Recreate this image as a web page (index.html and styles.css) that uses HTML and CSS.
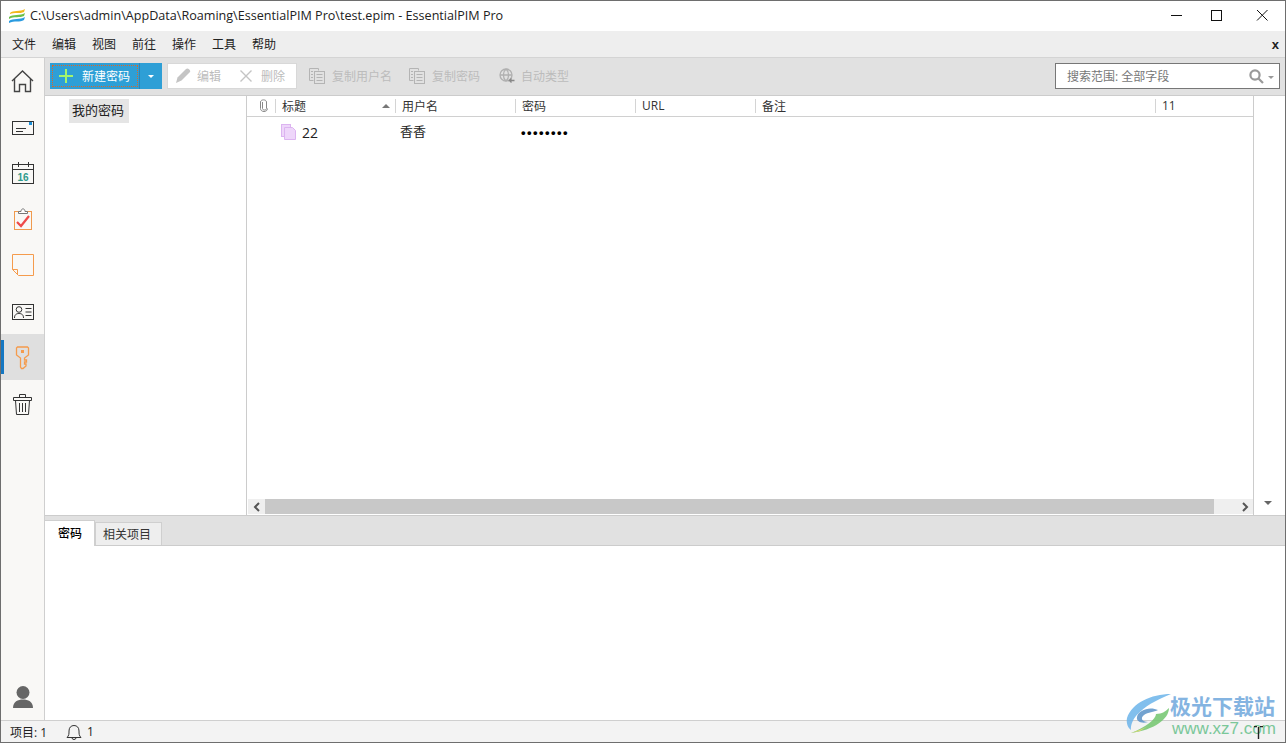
FILE: index.html
```html
<!DOCTYPE html>
<html lang="zh-CN">

<head>
    <meta charset="UTF-8">
    <title>EssentialPIM Pro</title>
    <link rel="stylesheet" href="styles.css">
</head>

<body>
    <div class="window">
        <!-- Title bar -->
        <div class="titlebar">
            <svg class="app-icon" width="16" height="14" viewBox="0 0 16 14">
                <path d="M1 4 C4 1 11 3 16 0 L15 3 C11 5 5 3 1 5Z" fill="#f2b81c" />
                <path d="M0 8 C4 5 11 7 16 4 L15 7 C11 9 5 7 0 10Z" fill="#6cc04a" />
                <path d="M0 12 C4 9 11 11 16 8 L15 11 C11 14 5 11 0 14Z" fill="#2a9be0" />
            </svg>
            <span class="title-text">C:\Users\admin\AppData\Roaming\EssentialPIM Pro\test.epim - EssentialPIM Pro</span>
            <div class="win-buttons">
                <svg width="46" height="30" viewBox="0 0 46 30"><path d="M24 14.5H35" stroke="#111" fill="none" /></svg>
                <svg width="46" height="30" viewBox="0 0 46 30"><rect x="18.5" y="9.5" width="10" height="10" stroke="#111" fill="none" /></svg>
                <svg width="46" height="30" viewBox="0 0 46 30"><path d="M18 9L28.5 19.5M28.5 9L18 19.5" stroke="#111" fill="none" /></svg>
            </div>
        </div>

        <!-- Menu -->
        <div class="menubar">
            <span>文件</span>
            <span>编辑</span>
            <span>视图</span>
            <span>前往</span>
            <span>操作</span>
            <span>工具</span>
            <span>帮助</span>
            <b class="menu-close">x</b>
        </div>

        <div class="main">
            <!-- Left navigation -->
            <div class="nav">
                <div class="nav-item">
                    <svg width="24" height="24" viewBox="0 0 24 24" fill="none" stroke="#444" stroke-width="1.4">
                        <path d="M1 11L11.5 1L22 11" />
                        <path d="M3.5 9V21.5H8.5V14.5H14.5V21.5H19.5V9" />
                    </svg>
                </div>
                <div class="nav-item">
                    <svg width="24" height="24" viewBox="0 0 24 24" fill="none" stroke="#333">
                        <rect x="1.5" y="5.5" width="21" height="13" />
                        <path d="M5 12.5H15M5 15.5H12" />
                        <rect x="18" y="6" width="3" height="3" fill="#1a8fd8" stroke="none" />
                    </svg>
                </div>
                <div class="nav-item">
                    <svg width="24" height="24" viewBox="0 0 24 24" fill="none" stroke="#333">
                        <rect x="1.5" y="2.5" width="21" height="19" />
                        <path d="M1.5 7.5H22.5M7.5 0V5M17.5 0V5" />
                        <text class="cal-day" x="12" y="18.5" text-anchor="middle">16</text>
                    </svg>
                </div>
                <div class="nav-item">
                    <svg width="24" height="24" viewBox="0 0 24 24" fill="none">
                        <rect x="3.5" y="3.5" width="17" height="18" stroke="#f09a4e" />
                        <path d="M7.5 5.5V3.5H10C10 0 14 0 14 3.5H16.5V5.5Z" fill="#fff" stroke="#777" />
                        <path d="M6 14L10 18L18 8" stroke="#ee4a4a" stroke-width="2.2" />
                    </svg>
                </div>
                <div class="nav-item">
                    <svg width="24" height="24" viewBox="0 0 24 24" fill="none" stroke="#f59b4c">
                        <path d="M1.5 .5H22.5V21.5H7.5L1.5 15.5Z" />
                        <path d="M1.5 15.5H6.5V20.5" />
                    </svg>
                </div>
                <div class="nav-item">
                    <svg width="24" height="24" viewBox="0 0 24 24" fill="none" stroke="#333">
                        <rect x="1.5" y="4.5" width="21" height="15" />
                        <circle cx="8" cy="9.5" r="2.8" />
                        <path d="M3.5 18C3.5 14.5 5.5 13.5 8 13.5S12.5 14.5 12.5 18" />
                        <path d="M14.5 8.5H20.5M14.5 12H20.5M14.5 15.5H20.5" />
                    </svg>
                </div>
                <div class="nav-item nav-item-active">
                    <svg width="24" height="24" viewBox="0 0 24 24" fill="none" stroke="#f59b4c" stroke-width="1.3">
                        <path d="M6.5 1H16.5L17.5 2V9L13.5 12V14H15.5V16H13.5V18H15V20L12 22.5H10.5L9.5 21V12L5.5 9V2Z" />
                        <rect x="10" y="4" width="3" height="3" fill="#f59b4c" stroke="none" />
                    </svg>
                </div>
                <div class="nav-item">
                    <svg width="24" height="24" viewBox="0 0 24 24" fill="none" stroke="#333">
                        <path d="M2.5 5.5H20.5V8.5H2.5ZM8.5 5V2.5H14.5V5" />
                        <path d="M4.5 8.5L5.5 22.5H17.5L18.5 8.5" />
                        <path d="M8.5 11V20M11.5 11V20M14.5 11V20" />
                    </svg>
                </div>
                <div class="nav-item nav-user">
                    <svg width="24" height="24" viewBox="0 0 24 24" fill="#666">
                        <circle cx="12" cy="6.5" r="6.5" />
                        <path d="M2 22C2 15.5 7 13.5 12 13.5S22 15.5 22 22Z" />
                    </svg>
                </div>
            </div>

            <div class="content">
                <!-- Toolbar -->
                <div class="toolbar">
                    <div class="new-btn">
                        <div class="new-btn-main">
                            <svg width="16" height="16" viewBox="0 0 16 16"><path d="M8 1V15M1 8H15" stroke="#a4f56c" stroke-width="2" /></svg>
                            <span>新建密码</span>
                        </div>
                        <div class="new-btn-drop"></div>
                    </div>
                    <div class="edit-group">
                        <span class="tool tool-edit">
                            <svg width="16" height="16" viewBox="0 0 16 16" fill="#c4c4c4"><path d="M1 15L2.5 9.5L11 1C12 .2 13 .2 14 1.2S15.6 3 15 4L6.5 12.5Z" /></svg>
                            <span>编辑</span>
                        </span>
                        <span class="tool tool-delete">
                            <svg width="14" height="14" viewBox="0 0 14 14"><path d="M1.5 1.5L12.5 12.5M12.5 1.5L1.5 12.5" stroke="#c4c4c4" stroke-width="1.4" /></svg>
                            <span>删除</span>
                        </span>
                    </div>
                    <span class="tool tool-copy-user">
                        <svg width="16" height="16" viewBox="0 0 16 16" fill="none" stroke="#b4b4b4"><path d="M9.5 2.5V.5H.5V12.5H4.5" /><rect x="5.5" y="3.5" width="10" height="12" /><path d="M7.5 6.5H13.5M7.5 9.5H13.5M7.5 12.5H13.5M2 3.5H4M2 6.5H4M2 9.5H4" /></svg>
                        <span>复制用户名</span>
                    </span>
                    <span class="tool tool-copy-pass">
                        <svg width="16" height="16" viewBox="0 0 16 16" fill="none" stroke="#b4b4b4"><path d="M9.5 2.5V.5H.5V12.5H4.5" /><rect x="5.5" y="3.5" width="10" height="12" /><path d="M7.5 6.5H13.5M7.5 9.5H13.5M7.5 12.5H13.5M2 3.5H4M2 6.5H4M2 9.5H4" /></svg>
                        <span>复制密码</span>
                    </span>
                    <span class="tool tool-auto">
                        <svg width="16" height="16" viewBox="0 0 16 16" fill="none" stroke="#b0b0b0" stroke-width="1.3"><circle cx="7" cy="7" r="6" /><path d="M1 7H13M7 1C3.5 4 3.5 10 7 13M7 1C10.5 4 10.5 10 7 13" /><path d="M15.5 12.5H10.5L12.5 10.5M10.5 12.5L12.5 14.5" stroke="#888" fill="#e1e1e1" /></svg>
                        <span>自动类型</span>
                    </span>
                    <div class="search">
                        <span class="search-text">搜索范围: 全部字段</span>
                        <svg width="15" height="15" viewBox="0 0 15 15" fill="none" stroke="#999" stroke-width="2.2"><circle cx="6" cy="6" r="4.6" /><path d="M9.5 9.5L14 14" /></svg>
                        <i class="caret caret-search"></i>
                    </div>
                </div>

                <div class="panes">
                    <!-- Folder tree -->
                    <div class="tree">
                        <span class="tree-node">我的密码</span>
                    </div>

                    <!-- Password list -->
                    <div class="list">
                        <div class="list-head">
                            <div class="head-clip">
                                <svg width="10" height="13" viewBox="0 0 10 13" fill="none" stroke="#888"><path d="M3.5 3V9.5C3.5 11.5 7.5 11.5 7.5 9.5V3C7.5 .2 1.5 .2 1.5 3V9.5C1.5 13.5 8.5 13.5 8.5 9.5" /></svg>
                            </div>
                            <div class="col col-title">标题<i class="sort-arrow"></i></div>
                            <div class="col">用户名</div>
                            <div class="col">密码</div>
                            <div class="col">URL</div>
                            <div class="col col-notes">备注</div>
                            <div class="col col-num">11</div>
                        </div>
                        <div class="list-row">
                            <svg class="row-icon" width="15" height="16" viewBox="0 0 15 16" fill="#eed6fa" stroke="#dcb4f0">
                                <rect x=".5" y=".5" width="9" height="12" />
                                <path d="M3.5 3.5H11.5L14.5 6.5V15.5H3.5Z" />
                            </svg>
                            <span class="cell cell-title">22</span>
                            <span class="cell cell-user">香香</span>
                            <span class="cell cell-pass">••••••••</span>
                        </div>
                        <div class="hscroll">
                            <div class="hscroll-btn hscroll-left">
                                <svg width="8" height="10" viewBox="0 0 8 10" fill="none"><path d="M6 1L2 5L6 9" stroke="#555" stroke-width="2" /></svg>
                            </div>
                            <div class="hscroll-thumb"></div>
                            <div class="hscroll-btn hscroll-right">
                                <svg width="8" height="10" viewBox="0 0 8 10" fill="none"><path d="M2 1L6 5L2 9" stroke="#555" stroke-width="2" /></svg>
                            </div>
                        </div>
                    </div>

                    <div class="side-col">
                        <i class="caret caret-side"></i>
                    </div>
                </div>

                <!-- Detail tabs -->
                <div class="tabs">
                    <span class="tab tab-active">密码</span>
                    <span class="tab">相关项目</span>
                </div>
                <div class="detail"></div>
            </div>
        </div>

        <!-- Status bar -->
        <div class="statusbar">
            <span class="status-count">项目: 1</span>
            <svg width="16" height="16" viewBox="0 0 16 16" fill="none" stroke="#333"><path d="M1 13.5C3 11.5 3 10 3 7C3 3.5 5 1.5 8 1.5S13 3.5 13 7C13 10 13 11.5 15 13.5ZM6 14C6 16 10 16 10 14" /></svg>
            <span class="status-bell">1</span>
        </div>

        <!-- Watermark over the window corner -->
        <div class="watermark">
            <svg width="46" height="41" viewBox="0 0 46 41">
                <path d="M45 1C25 1 6 10 1 25C0 30 2 35 5 37C4 28 12 14 45 1Z" fill="#6cb4ea" />
                <path d="M43 15C43 26 28 37 5 40C20 34 30 26 30 21C36 21 40 18 43 15Z" fill="#72c66e" />
                <path d="M5 40C12 38 18 35 22 33L14 38Z" fill="#e0d75c" />
                <path d="M32 17C24 13 12 17 11 24C10 28 15 31 22 29C16 29 14 25 18 22C22 19 28 19 32 17Z" fill="#5b93c8" />
            </svg>
            <div class="wm-text">
                <span class="wm-name">极光下载站</span>
                <span class="wm-url">www.xz7.com</span>
            </div>
        </div>
        <svg class="text-cursor" width="9" height="13" viewBox="0 0 9 13"><path d="M0 .5H3M6 .5H9M4.5 1V13" stroke="#222" stroke-width="1.4" fill="none" /></svg>
    </div>
</body>

</html>
```

FILE: styles.css
```css
* {
    box-sizing: border-box;
}

html,
body {
    margin: 0;
    height: 100%;
    overflow: hidden;
}

body {
    font-family: "Open Sans", "Noto Sans CJK SC", sans-serif;
    font-size: 12px;
    color: #222;
    background-color: #fff;
}

.window {
    position: relative;
    display: flex;
    flex-direction: column;
    width: 1286px;
    height: 743px;
    border: 1px solid #6e6e6e;
}

/* Title bar */
.titlebar {
    display: flex;
    align-items: center;
    flex: none;
    height: 30px;
    padding-left: 8px;
    background-color: #fff;
}

.app-icon {
    margin-right: 5px;
}

.title-text {
    margin-top: -2px;
    font-size: 12.6px;
    color: #222;
}

.win-buttons {
    display: flex;
    margin-left: auto;
}

.win-buttons svg {
    display: block;
}

/* Menu */
.menubar {
    display: flex;
    align-items: center;
    gap: 16px;
    flex: none;
    height: 26px;
    padding: 0 6px 0 11px;
    background-color: #eeeeee;
}

.menu-close {
    margin-left: auto;
    font-family: "Liberation Sans", sans-serif;
    font-size: 13px;
}

.main {
    display: flex;
    flex: 1;
    min-height: 0;
}

/* Left navigation */
.nav {
    display: flex;
    flex-direction: column;
    flex: none;
    width: 44px;
    background-color: #f9f8f6;
    border-top: 1px solid #d4d4d4;
    border-right: 1px solid #cfcfcf;
}

.nav-item {
    position: relative;
    flex: none;
    height: 46px;
    padding: 12px 0 0 10px;
}

.nav-item svg {
    display: block;
}

.nav-item-active {
    background-color: #dfdfdf;
}

/* blue marker on the selected module */
.nav-item-active::before {
    content: "";
    position: absolute;
    left: 0;
    top: 6px;
    width: 3px;
    height: 34px;
    background-color: #1577c2;
}

.nav-user {
    margin-top: auto;
}

.cal-day {
    font-family: "Liberation Sans", sans-serif;
    font-size: 10px;
    font-weight: 700;
    fill: #2f9a8c;
    stroke: none;
}

.content {
    display: flex;
    flex-direction: column;
    flex: 1;
    min-width: 0;
}

/* Toolbar */
.toolbar {
    display: flex;
    align-items: center;
    flex: none;
    height: 39px;
    padding: 0 5px 1px;
    background-color: #e1e1e1;
    border-top: 1px solid #d4d4d4;
    border-bottom: 1px solid #cccccc;
}

.new-btn {
    display: flex;
    align-items: center;
    width: 112px;
    height: 26px;
    background-color: #2e9fd6;
    color: #fff;
}

.new-btn-main {
    display: flex;
    align-items: center;
    gap: 8px;
    width: 86px;
    height: 22px;
    margin-left: 2px;
    padding-left: 5px;
    border: 1px dotted #d9682a;
}

.new-btn-drop {
    position: relative;
    flex: 1;
    height: 26px;
    margin-left: 1px;
    border-left: 1px solid #2a86b8;
}

.new-btn-drop::after {
    content: "";
    position: absolute;
    left: 8px;
    top: 12px;
    border: 3px solid transparent;
    border-top: 3px solid #fff;
}

.edit-group {
    display: flex;
    align-items: center;
    width: 130px;
    height: 26px;
    margin-left: 5px;
    background-color: #fff;
    border: 1px solid #d8d8d8;
}

.tool {
    display: flex;
    align-items: center;
    color: #bcbcbc;
}

.tool svg {
    flex: none;
}

.tool-edit {
    gap: 6px;
    margin-left: 7px;
}

.tool-delete {
    gap: 8px;
    margin-left: 18px;
}

.tool-copy-user,
.tool-copy-pass {
    gap: 7px;
}

.tool-copy-user {
    margin-left: 12px;
}

.tool-copy-pass {
    margin-left: 17px;
}

.tool-auto {
    gap: 6px;
    margin-left: 19px;
}

.search {
    display: flex;
    align-items: center;
    width: 225px;
    height: 26px;
    margin-left: auto;
    padding-left: 11px;
    background-color: #fff;
    border: 1px solid #777;
}

.search-text {
    flex: 1;
    color: #777;
}

.caret {
    display: block;
    width: 0;
    height: 0;
    border-left: 3px solid transparent;
    border-right: 3px solid transparent;
    border-top: 3px solid #999;
}

.caret-search {
    margin: 2px 5px 0 4px;
}

/* Panes */
.panes {
    display: flex;
    flex: none;
    height: 419px;
}

.tree {
    flex: none;
    width: 202px;
    padding: 3px 0 0 24px;
    border-right: 1px solid #cccccc;
}

.tree-node {
    display: block;
    width: 60px;
    height: 24px;
    padding-left: 3px;
    font-size: 13px;
    line-height: 23px;
    background-color: #e5e5e5;
}

.list {
    display: flex;
    flex-direction: column;
    flex: none;
    width: 1007px;
    border-right: 1px solid #cccccc;
}

.list-head {
    display: flex;
    align-items: center;
    flex: none;
    height: 21px;
    padding-bottom: 1px;
    border-bottom: 1px solid #d0d0d0;
}

.head-clip {
    flex: none;
    width: 28px;
    padding-left: 12px;
}

.head-clip svg {
    display: block;
}

.col {
    display: flex;
    align-items: center;
    flex: none;
    width: 120px;
    height: 14px;
    padding-left: 6px;
    border-left: 1px solid #d4d4d4;
    color: #333;
}

.col-title {
    position: relative;
}

.sort-arrow {
    position: absolute;
    left: 106px;
    top: 5px;
    border-left: 4px solid transparent;
    border-right: 4px solid transparent;
    border-bottom: 4px solid #777;
}

.col-notes {
    width: 400px;
}

.col-num {
    width: 98px;
}

.list-row {
    display: flex;
    align-items: center;
    flex: none;
    height: 30px;
    padding-left: 34px;
    font-size: 13px;
}

.row-icon {
    flex: none;
    margin-right: 6px;
}

.cell {
    flex: none;
}

.cell-title {
    width: 98px;
    font-size: 14px;
}

.cell-user {
    width: 121px;
    margin-bottom: 4px;
}

.cell-pass {
    font-family: "Liberation Sans", sans-serif;
    font-weight: 700;
    letter-spacing: 1.45px;
    color: #000;
}

.hscroll {
    display: flex;
    flex: none;
    height: 15px;
    margin: auto 0 1px 1px;
}

.hscroll-btn {
    display: flex;
    align-items: center;
    background-color: #efefef;
}

.hscroll-left {
    width: 17px;
    padding-left: 5px;
}

.hscroll-right {
    width: 39px;
    padding-left: 27px;
}

.hscroll-thumb {
    flex: 1;
    background-color: #c8c8c8;
}

.side-col {
    flex: 1;
    padding: 405px 0 0 10px;
}

.caret-side {
    border-left-width: 4px;
    border-right-width: 4px;
    border-top: 4px solid #666;
}

/* Detail tabs */
.tabs {
    display: flex;
    align-items: flex-end;
    flex: none;
    height: 31px;
    background-color: #e1e1e1;
    border-top: 1px solid #cccccc;
    border-bottom: 1px solid #cccccc;
}

.tab {
    display: block;
    width: 67px;
    height: 23px;
    padding-left: 7px;
    line-height: 23px;
    color: #333;
    background-color: #eeeeee;
    border: 1px solid #cfcfcf;
    border-bottom: none;
}

.tab-active {
    width: 50px;
    height: 26px;
    margin-bottom: -1px;
    padding-left: 13px;
    line-height: 26px;
    font-weight: 500;
    color: #000;
    background-color: #fff;
    border-left: none;
    border-right-color: #cfcfcf;
}

.detail {
    flex: 1;
    background-color: #fff;
}

/* Status bar */
.statusbar {
    display: flex;
    align-items: center;
    flex: none;
    height: 22px;
    padding-left: 9px;
    background-color: #f3f3f3;
    border-top: 1px solid #cfcfcf;
}

.status-count {
    width: 56px;
}

.status-bell {
    margin-left: 5px;
}

/* Watermark */
.watermark {
    position: absolute;
    left: 1125px;
    top: 692px;
    display: flex;
    opacity: .85;
}

.wm-text {
    display: flex;
    flex-direction: column;
}

.wm-name {
    font-family: "Noto Sans CJK SC", sans-serif;
    font-size: 21px;
    font-weight: 700;
    line-height: 24px;
    margin-left: -2px;
    color: #6fa8dc;
}

.wm-url {
    margin-top: 3px;
    font-family: "Liberation Sans", sans-serif;
    font-size: 17px;
    line-height: 17px;
    color: #66c08a;
}

.text-cursor {
    position: absolute;
    left: 1253px;
    top: 725px;
}
```
